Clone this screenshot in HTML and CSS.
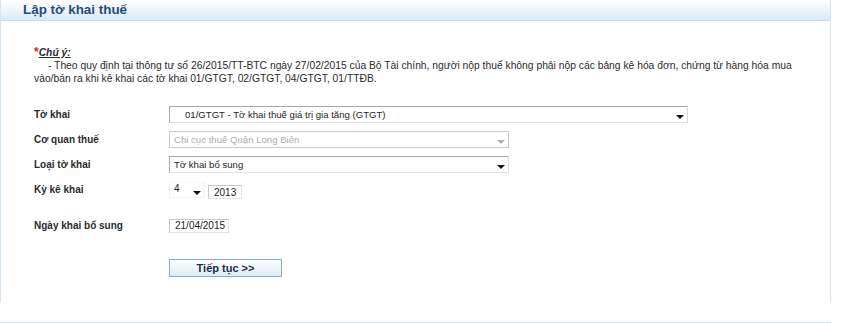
FILE: index.html
```html
<!DOCTYPE html>
<html lang="vi">
<head>
    <meta charset="UTF-8">
    <meta name="viewport" content="width=device-width, initial-scale=1.0">
    <title>Lập tờ khai thuế</title>
    <link rel="stylesheet" href="styles.css">
</head>
<body>
    <div class="panel">
        <div class="panel-header">
            <h2>Lập tờ khai thuế</h2>
        </div>
        <div class="panel-body">
            <div class="note">
                <div class="note-title"><span class="required">*</span><u>Chú ý:</u></div>
                <p>- Theo quy định tại thông tư số 26/2015/TT-BTC ngày 27/02/2015 của Bộ Tài chính, người nộp thuế không phải nộp các bảng kê hóa đơn, chứng từ hàng hóa mua vào/bán ra khi kê khai các tờ khai 01/GTGT, 02/GTGT, 04/GTGT, 01/TTĐB.</p>
            </div>

            <form class="form" onsubmit="return false;">
                <div class="row">
                    <label>Tờ khai</label>
                    <span class="select-wrap select-long">
                        <select class="indent">
                            <option>01/GTGT - Tờ khai thuế giá trị gia tăng (GTGT)</option>
                        </select>
                    </span>
                </div>
                <div class="row">
                    <label>Cơ quan thuế</label>
                    <span class="select-wrap select-mid disabled">
                        <select disabled>
                            <option>Chi cục thuế Quận Long Biên</option>
                        </select>
                    </span>
                </div>
                <div class="row">
                    <label>Loại tờ khai</label>
                    <span class="select-wrap select-mid">
                        <select>
                            <option>Tờ khai chính thức</option>
                            <option selected>Tờ khai bổ sung</option>
                        </select>
                    </span>
                </div>
                <div class="row">
                    <label>Kỳ kê khai</label>
                    <span class="select-wrap select-small">
                        <select>
                            <option>1</option>
                            <option>2</option>
                            <option>3</option>
                            <option selected>4</option>
                        </select>
                    </span>
                    <input type="text" class="input-year" value="2013">
                </div>
                <div class="row row-date">
                    <label>Ngày khai bổ sung</label>
                    <input type="text" class="input-date" value="21/04/2015">
                </div>
                <div class="actions">
                    <button type="submit" class="btn">Tiếp tục &gt;&gt;</button>
                </div>
            </form>
        </div>
    </div>
    <div class="next-panel"></div>
</body>
</html>
```

FILE: styles.css
```css
body {
    margin: 0;
    font-family: "Liberation Sans", Arial, sans-serif;
    font-size: 10px;
    color: #2b2b2b;
    background-color: #fff;
}

.panel {
    width: 831px;
    height: 303px;
    box-sizing: border-box;
    border-left: 1px solid #d5e5f4;
    border-right: 1px solid #d5e5f4;
}

.panel-header {
    height: 20px;
    padding-left: 22px;
    background: linear-gradient(#ffffff, #dbe9f8);
    border-bottom: 1px solid #cadcef;
}

.panel-header h2 {
    margin: 0;
    font-size: 13.4px;
    line-height: 20px;
    font-weight: bold;
    color: #1f4c80;
}

.panel-body {
    padding: 25px 0 0 33px;
}

.note {
    width: 770px;
    font-size: 10.3px;
    line-height: 13px;
}

.note-title {
    font-weight: bold;
    font-style: italic;
}

.required {
    color: #e02020;
    font-style: normal;
    font-size: 12px;
}

.note p {
    margin: 0;
    text-indent: 14px;
}

.form {
    margin-top: 17px;
}

.row {
    display: flex;
    align-items: center;
    height: 25px;
}

.row label {
    width: 135px;
    flex-shrink: 0;
    font-weight: bold;
    color: #2b2b2b;
}

.select-wrap {
    position: relative;
    display: inline-block;
}

.select-wrap select {
    appearance: none;
    -webkit-appearance: none;
    width: 100%;
    height: 17px;
    margin: 0;
    padding: 0 14px 0 4px;
    font-family: inherit;
    font-size: 9.6px;
    color: #1e1e1e;
    background-color: #fff;
    border: 1px solid;
    border-color: #a9a9a9 #dedede #e2e2e2 #a9a9a9;
    border-radius: 0;
    outline: none;
}

.select-wrap select.indent {
    padding-left: 15px;
}

.select-wrap::after {
    content: "";
    position: absolute;
    right: 4px;
    top: 9px;
    border-left: 4px solid transparent;
    border-right: 4px solid transparent;
    border-top: 4px solid #111;
    pointer-events: none;
}

.select-long {
    width: 519px;
}

.select-mid {
    width: 340px;
}

.select-small {
    width: 36px;
}

.select-small select {
    height: 16px;
    font-size: 10px;
    border-color: #f2f2f2;
    padding-bottom: 3px;
}

.select-small::after {
    right: 4px;
    top: 9px;
}

.disabled select {
    color: #8a8a8a;
    border-color: #b4b4b4;
}

.disabled::after {
    border-top-color: #b0b0b0;
}

input[type="text"] {
    height: 14px;
    margin: 0;
    padding: 0 3px;
    box-sizing: border-box;
    font-family: inherit;
    font-size: 10px;
    color: #1e1e1e;
    border: 1px solid;
    border-color: #c8c8c8 #e2e2e2 #e2e2e2 #c8c8c8;
    outline: none;
}

.input-year {
    width: 34px;
    margin-left: 3px !important;
    margin-top: 5px !important;
    padding-left: 5px !important;
}

.row-date {
    margin-top: 11px;
}

.input-date {
    width: 60px;
    padding-left: 5px !important;
}

.actions {
    margin-top: 21px;
    padding-left: 135px;
}

.btn {
    width: 113px;
    height: 18px;
    padding: 0;
    font-family: inherit;
    font-size: 11px;
    font-weight: bold;
    color: #1b2c47;
    background: linear-gradient(#ffffff, #dceaf7);
    border: 1px solid #86abd0;
    border-radius: 0;
    cursor: pointer;
}

.btn:hover {
    background: linear-gradient(#ffffff, #c9def3);
}

.next-panel {
    width: 831px;
    margin-top: 19px;
    border-top: 1px solid #cfe0f0;
}
```
